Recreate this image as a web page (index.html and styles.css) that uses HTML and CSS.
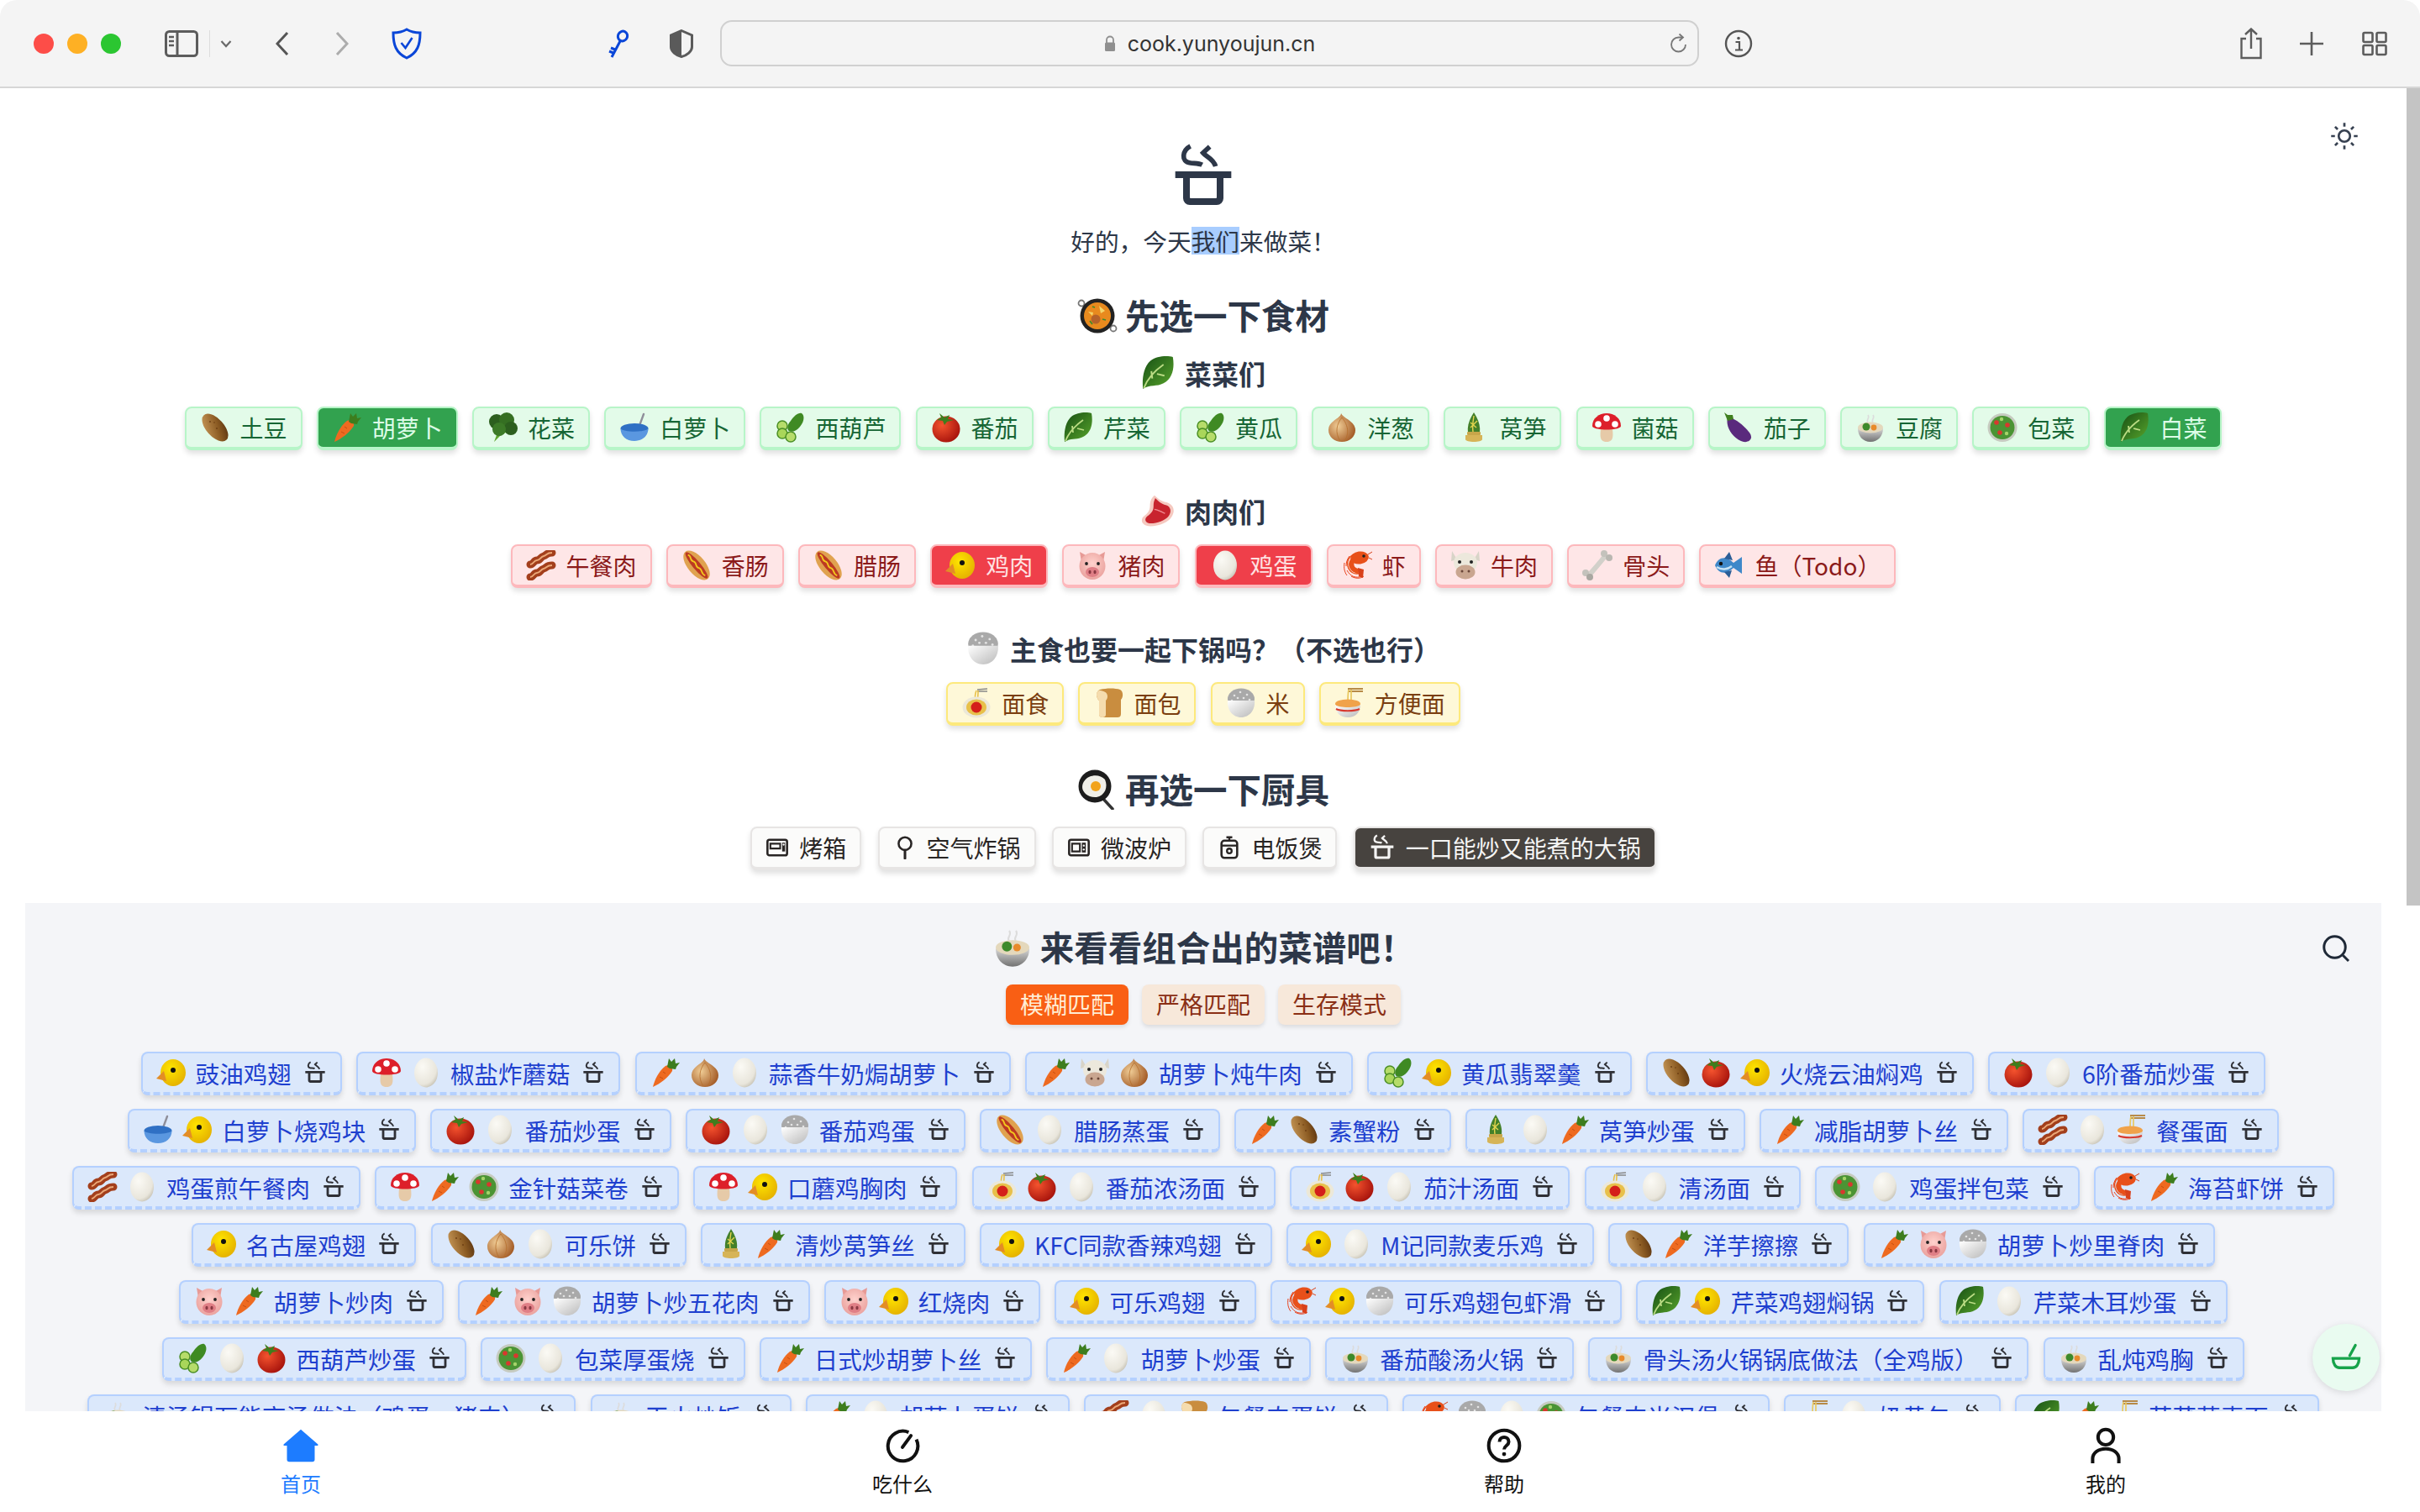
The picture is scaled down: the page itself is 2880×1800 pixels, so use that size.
FILE: index.html
```html
<!DOCTYPE html>
<html>
  <head>
    <meta charset="UTF-8">
    <title>cook.yunyoujun.cn</title>
    <link rel="stylesheet" href="styles.css">
  </head>
  <body>
    <!-- emoji + icon sprites -->
    <svg class="sprites" xmlns="http://www.w3.org/2000/svg">
      <defs>
        <linearGradient id="gPotato" x1="0" y1="0" x2="1" y2="1"><stop offset="0" stop-color="#d0a160"/><stop offset=".6" stop-color="#8a5a22"/><stop offset="1" stop-color="#4f2a0c"/></linearGradient>
        <radialGradient id="gTomato" cx=".35" cy=".35" r=".75"><stop offset="0" stop-color="#f4532e"/><stop offset="1" stop-color="#a20f0a"/></radialGradient>
        <radialGradient id="gEgg" cx=".35" cy=".3" r=".85"><stop offset="0" stop-color="#fbfaf5"/><stop offset=".7" stop-color="#e9e6dc"/><stop offset="1" stop-color="#b5b0a0"/></radialGradient>
        <radialGradient id="gOnion" cx=".35" cy=".45" r=".75"><stop offset="0" stop-color="#f0cd96"/><stop offset="1" stop-color="#9a4d18"/></radialGradient>
        <radialGradient id="gChick" cx=".4" cy=".35" r=".8"><stop offset="0" stop-color="#ffe500"/><stop offset="1" stop-color="#e0a800"/></radialGradient>
        <radialGradient id="gPig" cx=".5" cy=".4" r=".7"><stop offset="0" stop-color="#ffd2cd"/><stop offset="1" stop-color="#e79a96"/></radialGradient>
        <linearGradient id="gStew" x1="0" y1="0" x2="0" y2="1"><stop offset="0" stop-color="#d6d6d6"/><stop offset="1" stop-color="#727272"/></linearGradient>
        <linearGradient id="gWhite" x1="0" y1="0" x2="1" y2="1"><stop offset="0" stop-color="#ffffff"/><stop offset="1" stop-color="#b9b9b9"/></linearGradient>
        <linearGradient id="gLeaf" x1="0" y1="0" x2="1" y2="1"><stop offset="0" stop-color="#164f14"/><stop offset="1" stop-color="#5aa62c"/></linearGradient>
      </defs>

      <symbol id="e-potato" viewBox="0 0 36 36"><ellipse cx="18" cy="18" rx="10.500" ry="20" transform="rotate(-42 18 18)" fill="url(#gPotato)"/><circle cx="12" cy="11" r=".9" fill="#6b3d12"/><circle cx="20" cy="19" r=".9" fill="#6b3d12"/><circle cx="17" cy="12" r=".8" fill="#6b3d12"/></symbol>
      <symbol id="e-carrot" viewBox="0 0 36 36"><path d="M3 35C5 26 11 15 18 10c4-2 9 1 8 6-5 8-14 15-23 19z" fill="#ee6a20"/><path d="M11 23l4 2M15 17l3 2" stroke="#c64e10" stroke-width="1"/><path d="M20 11L22 1l3 4 4-4 1 6 5-1-4 5-1 3-7-1z" fill="#3d7d1e"/></symbol>
      <symbol id="e-broccoli" viewBox="0 0 36 36"><path d="M8 35l6-16 11 3-10 6z" fill="#5da52c"/><circle cx="11" cy="11" r="9" fill="#2c5f1e"/><circle cx="23" cy="9" r="9" fill="#356f22"/><circle cx="28" cy="19" r="8" fill="#2c5f1e"/><circle cx="14" cy="20" r="8" fill="#3c7a27"/></symbol>
      <symbol id="e-bowl" viewBox="0 0 36 36"><path d="M29 2l-7 19" stroke="#8f8f9a" stroke-width="2.400" stroke-linecap="round"/><ellipse cx="18" cy="19" rx="16.500" ry="6" fill="#2f70c4"/><path d="M1.500 19c3 5 30 5 33 0 0 9-7 15-16.500 15S1.500 28 1.500 19z" fill="#5a97e0"/></symbol>
      <symbol id="e-cucumber" viewBox="0 0 36 36"><path d="M32 1c4 3 3 10-2 16-4 5-9 7-13 5-3-2-2-8 2-12 4-6 9-10 13-9z" fill="#3f8a23"/><circle cx="9" cy="16" r="6" fill="#b6dc6a" stroke="#4b8f25" stroke-width="1.500"/><circle cx="9" cy="25" r="6" fill="#a9d65a" stroke="#4b8f25" stroke-width="1.500"/><circle cx="19" cy="29" r="6" fill="#b6dc6a" stroke="#4b8f25" stroke-width="1.500"/></symbol>
      <symbol id="e-tomato" viewBox="0 0 36 36"><ellipse cx="18" cy="20" rx="16.500" ry="15.500" fill="url(#gTomato)"/><path d="M10 1l6 5 6-3-2 5 7 1-8 2-3 4-2-5-7-1 5-3z" fill="#3f7d1d"/></symbol>
      <symbol id="e-leafy" viewBox="0 0 36 36"><path d="M2 35C1 26 2 12 10 5 16 0 28-1 34 1c2 11 0 23-10 28-7 4-15 1-22 6z" fill="url(#gLeaf)"/><path d="M3 34c4-10 11-18 21-25M12 24l-1-8M17 19l8 2" stroke="#bbdc84" stroke-width="1.800" fill="none"/></symbol>
      <symbol id="e-onion" viewBox="0 0 36 36"><path d="M17 1c0 6-15 9-15 20 0 8 7 14 16 14s16-6 16-14C34 10 19 7 17 1z" fill="url(#gOnion)"/><path d="M18 6c-6 7-9 18-2 28M18 6c6 7 10 18 3 28" stroke="#b56f2c" stroke-width=".8" fill="none"/></symbol>
      <symbol id="e-bamboo" viewBox="0 0 36 36"><path d="M18 0c-5 8-8 15-7 23h14c1-8-2-15-7-23z" fill="#44802a"/><path d="M18 4c-1 6-2 12-1 19M14 12l7 6M22 10l-8 8" stroke="#e3d34e" stroke-width="1.400" fill="none"/><rect x="10" y="23" width="16" height="4" rx="1" fill="#c7a64a"/><path d="M8 27h20v5c0 4-20 4-20 0z" fill="#d6b457"/></symbol>
      <symbol id="e-mushroom" viewBox="0 0 36 36"><path d="M11 18h14c0 7 3 17-7 17s-7-10-7-17z" fill="#e6caa8"/><path d="M1 16C1 7 9 1 18 1s17 6 17 15c0 6-34 6-34 0z" fill="#dd1f2a"/><circle cx="18" cy="7" r="3.800" fill="#fff"/><circle cx="8" cy="14" r="3.800" fill="#fff"/><circle cx="28" cy="14" r="3.800" fill="#fff"/></symbol>
      <symbol id="e-eggplant" viewBox="0 0 36 36"><path d="M5 6c9 1 18 8 26 18 5 7 0 12-7 11C12 32 2 18 5 6z" fill="#5a2a7d"/><path d="M1 0l4 3 6 0 1 5-7 2-2-5z" fill="#3f7f1f"/></symbol>
      <symbol id="e-stew" viewBox="0 0 36 36"><path d="M15 12c-3-3 3-5 0-9M21 12c-3-3 3-5 0-9" stroke="#dcdcdc" stroke-width="1.600" fill="none"/><path d="M3 19c0 9 6 16 15 16s15-7 15-16z" fill="url(#gStew)"/><ellipse cx="18" cy="18" rx="15" ry="6.500" fill="#e4d8bc"/><circle cx="13" cy="17" r="4.500" fill="#3d8a2b"/><circle cx="22" cy="18" r="3.400" fill="#e88a2a"/></symbol>
      <symbol id="e-salad" viewBox="0 0 36 36"><ellipse cx="18" cy="18" rx="17.500" ry="17" fill="#c6cbc0"/><ellipse cx="18" cy="18" rx="14.500" ry="14" fill="#4b9434"/><circle cx="11" cy="12" r="2.800" fill="#d8382e"/><circle cx="24" cy="15" r="2.800" fill="#d8382e"/><circle cx="15" cy="24" r="2.800" fill="#d8382e"/><circle cx="23" cy="25" r="2.200" fill="#a5d46a"/><circle cx="17" cy="8" r="2.200" fill="#a5d46a"/></symbol>
      <symbol id="e-bacon" viewBox="0 0 36 36"><path d="M5 17c4 0 4-5 8-5s4-4 8-5 3-4 10-4" stroke="#a33f1c" stroke-width="9" fill="none" stroke-linecap="round"/><path d="M5 17c4 0 4-5 8-5s4-4 8-5 3-4 10-4" stroke="#eba878" stroke-width="2" fill="none"/><path d="M5 32c4 0 4-5 8-5s4-4 8-5 3-4 10-4" stroke="#a33f1c" stroke-width="9" fill="none" stroke-linecap="round"/><path d="M5 32c4 0 4-5 8-5s4-4 8-5 3-4 10-4" stroke="#eba878" stroke-width="2" fill="none"/></symbol>
      <symbol id="e-hotdog" viewBox="0 0 36 36"><g transform="rotate(-40 18 18)"><ellipse cx="18" cy="18" rx="10.500" ry="21" fill="#e0a24f"/><ellipse cx="18" cy="18" rx="4.800" ry="20" fill="#bd3a22"/><path d="M18 2c3 4-3 6 0 10s-3 6 0 10 -3 6 0 12" stroke="#f2c91d" stroke-width="1.800" fill="none"/></g></symbol>
      <symbol id="e-chick" viewBox="0 0 36 36"><ellipse cx="20" cy="18" rx="15" ry="16" fill="url(#gChick)"/><circle cx="20" cy="15" r="3" fill="#111"/><path d="M9 16L0 25l12 3z" fill="#e38d26"/></symbol>
      <symbol id="e-pig" viewBox="0 0 36 36"><path d="M3 2l9 5-7 7zM33 2l-9 5 7 7z" fill="#e79a96"/><ellipse cx="18" cy="19" rx="15.500" ry="16" fill="url(#gPig)"/><circle cx="11" cy="16" r="1.900" fill="#222"/><circle cx="25" cy="16" r="1.900" fill="#222"/><ellipse cx="18" cy="26" rx="8" ry="6" fill="#e07f86"/><ellipse cx="15" cy="26" rx="1.600" ry="2.200" fill="#8a3942"/><ellipse cx="21" cy="26" rx="1.600" ry="2.200" fill="#8a3942"/></symbol>
      <symbol id="e-egg" viewBox="0 0 36 36"><ellipse cx="18" cy="18" rx="14" ry="17.500" fill="url(#gEgg)"/></symbol>
      <symbol id="e-shrimp" viewBox="0 0 36 36"><path d="M22 27c-7 3-13-1-15-8-2-8 4-15 13-15" stroke="#e8501a" stroke-width="1.400" fill="none"/><path d="M6 24c4 7 10 10 18 7M11 31c5 3 11 3 15 0M3 15c-1 6 0 11 3 15M9 7c-3 4-4 8-4 12" stroke="#e8401a" stroke-width="1" fill="none"/><ellipse cx="21" cy="9" rx="11" ry="7.500" transform="rotate(-8 21 9)" fill="#e8501a"/><path d="M13 12C9 17 12 24 20 25" stroke="#e8501a" stroke-width="6" fill="none"/><path d="M19 21l7 2-1 10-5-2z" fill="#d8401a"/><circle cx="26" cy="7" r="1.800" fill="#222"/><path d="M31 5l5-3M32 9l4 2" stroke="#d8401a" stroke-width="1"/></symbol>
      <symbol id="e-cow" viewBox="0 0 36 36"><path d="M2 1l6 10-7 2zM34 1l-6 10 7 2z" fill="#d8d4c8"/><ellipse cx="18" cy="15" rx="14" ry="12" fill="#ece8dc"/><circle cx="11" cy="14" r="2" fill="#222"/><circle cx="25" cy="14" r="2" fill="#222"/><ellipse cx="18" cy="26" rx="11.500" ry="8.500" fill="#c9a690"/><circle cx="14" cy="25" r="1.500" fill="#6a4638"/><circle cx="22" cy="25" r="1.500" fill="#6a4638"/></symbol>
      <symbol id="e-bone" viewBox="0 0 36 36"><path d="M8 30c5-6 13-15 20-24" stroke="#d2d0ca" stroke-width="6" fill="none"/><circle cx="26" cy="4" r="4" fill="#c4c2bc"/><circle cx="32" cy="9" r="4" fill="#b9b7b1"/><circle cx="4" cy="27" r="4" fill="#c4c2bc"/><circle cx="9" cy="32" r="4" fill="#a9a7a1"/></symbol>
      <symbol id="e-fish" viewBox="0 0 36 36"><path d="M1 18C5 8 14 6 23 15l10-7v20l-10-7C14 30 5 28 1 18z" fill="#3f88c9"/><path d="M12 10l6-8 4 10zM12 26l6 7 3-9z" fill="#2a5d96"/><circle cx="8" cy="16" r="2.200" fill="#111"/><path d="M3 20c6 4 13 3 18-1" stroke="#c5e2f5" stroke-width="2.400" fill="none"/></symbol>
      <symbol id="e-spaghetti" viewBox="0 0 36 36"><path d="M19 2l12-1M19 4h12" stroke="#888" stroke-width="1.500"/><path d="M18 3c-2 5-2 8-1 12M20 3c0 5 0 8-1 12" stroke="#e8c04a" stroke-width="1.600" fill="none"/><ellipse cx="18" cy="23" rx="16.500" ry="12.500" fill="#ece8d8"/><ellipse cx="18" cy="23" rx="12" ry="9.500" fill="#e8c04a"/><circle cx="18" cy="23" r="6.500" fill="#d41f1a"/></symbol>
      <symbol id="e-bread" viewBox="0 0 36 36"><path d="M8 2c8-2 18-2 24 0 4 2 4 9 1 12v17c0 3-2 4-4 4H12c-3 0-5-1-5-4V15C3 11 3 4 8 2z" fill="#c98d3f"/><path d="M7 3c5 0 10 2 10 7 0 2-1 4-2 5v17c0 2-2 3-4 3-2 0-4-1-4-3V15C3 11 3 4 7 3z" fill="#f5dcae"/></symbol>
      <symbol id="e-rice" viewBox="0 0 36 36"><ellipse cx="18" cy="13" rx="16" ry="12.500" fill="#a9a9a9"/><g fill="#e4e4e4"><circle cx="10" cy="9" r="1.300"/><circle cx="17" cy="5" r="1.300"/><circle cx="25" cy="8" r="1.300"/><circle cx="14" cy="12" r="1.300"/><circle cx="21" cy="12" r="1.300"/><circle cx="28" cy="14" r="1.300"/><circle cx="7" cy="15" r="1.300"/></g><path d="M2 15h32c1 11-6 20-16 20S1 26 2 15z" fill="url(#gWhite)"/></symbol>
      <symbol id="e-ramen" viewBox="0 0 36 36"><path d="M16 1h18M16 4h18" stroke="#b78a48" stroke-width="1.800"/><path d="M17 2c-1 5-1 10-1 17M20 2v17" stroke="#e8c860" stroke-width="1.700" fill="none"/><ellipse cx="16" cy="19" rx="15" ry="5.500" fill="#f0a24a"/><path d="M1 20c4 4 26 4 30 0 0 9-6 15-15 15S1 29 1 20z" fill="url(#gWhite)"/><path d="M2 25c6 3 22 3 28 0" stroke="#d8382e" stroke-width="2" fill="none"/></symbol>
      <symbol id="e-steak" viewBox="0 0 48 48"><g transform="translate(-6 0) scale(1.250 1)"><path d="M20 2c6 6 7 8 14 10 8 3 10 12 6 20-3 8-16 15-27 14-9-2-9-11-4-15 5-5 6-9 6-16 0-5 2-10 5-13z" fill="#f5c9c0"/><path d="M21 6c5 6 7 8 12 10 6 2 7 10 3 16-4 6-15 11-22 10-6-2-5-8-1-11 6-6 6-10 6-15 0-4 1-7 2-10z" fill="#c8242e"/><path d="M20 22c5 1 9 4 12 6" stroke="#f08a90" stroke-width="1.600" fill="none"/></g></symbol>
      <symbol id="e-paella" viewBox="0 0 48 48"><circle cx="5" cy="9" r="3.500" fill="none" stroke="#777" stroke-width="1.800"/><circle cx="43" cy="39" r="3.500" fill="none" stroke="#777" stroke-width="1.800"/><circle cx="24" cy="24" r="20.500" fill="#222"/><circle cx="24" cy="24" r="16" fill="#e88a1e"/><circle cx="22" cy="28" r="5.500" fill="#b5622a"/><path d="M26 12l7 6-5 3zM13 19l6 1-1 4z" fill="#f4d56a"/><path d="M15 30l3 4M30 28l4 1M18 13l3 1" stroke="#3f8a2a" stroke-width="1.800"/></symbol>
      <symbol id="e-pan" viewBox="0 0 48 48"><path d="M30 34l12 13" stroke="#333" stroke-width="3.500" stroke-linecap="round"/><ellipse cx="21" cy="20" rx="19.500" ry="19.500" fill="#1c1c1c"/><path d="M9 13c5-7 18-8 24-1 4 9 0 19-10 21C13 34 6 27 6 21c0-3 1-6 3-8z" fill="#f0efe8"/><circle cx="22" cy="20" r="6" fill="#f2a31b"/></symbol>

      <symbol id="pot" viewBox="0 0 24 24"><path d="M7.400 1.200C4.600 2.600 3.800 6.800 7.400 7.200 9 7.400 10.500 7.300 11.600 7.900M14.300 1.400L11.900 3.600C13 5 15.600 5.600 16.400 8.400" fill="none" stroke="currentColor" stroke-width="1.700"/><path fill-rule="evenodd" d="M2 10.200h20v2.400h-2.800v7.200a2.400 2.400 0 0 1-2.400 2.400H7.200a2.400 2.400 0 0 1-2.400-2.400v-7.200H2zM7.200 12.600v6.900c0 .2.100.3.300.3h9c.2 0 .3-.1.300-.3v-6.900z" fill="currentColor"/></symbol>
      <symbol id="i-oven" viewBox="0 0 24 24"><rect x="2" y="4" width="20" height="16" rx="2" fill="none" stroke="currentColor" stroke-width="2.200"/><path d="M5 8h10v5H5z" fill="none" stroke="currentColor" stroke-width="1.800"/><path d="M17 7h3v9h-3z" fill="currentColor"/><circle cx="18.500" cy="9" r="1" fill="#fff"/></symbol>
      <symbol id="i-fryer" viewBox="0 0 24 24"><circle cx="12" cy="8" r="6.500" fill="none" stroke="currentColor" stroke-width="2.200"/><path d="M12 14.500V23" stroke="currentColor" stroke-width="2.600" stroke-linecap="round"/></symbol>
      <symbol id="i-wave" viewBox="0 0 24 24"><rect x="2" y="4" width="20" height="16" rx="2" fill="none" stroke="currentColor" stroke-width="2.200"/><path d="M5 8h8v8H5z" fill="none" stroke="currentColor" stroke-width="1.800"/><path d="M15 7h4v10h-4z" fill="currentColor"/><circle cx="17" cy="10" r="1" fill="#fff"/><circle cx="17" cy="14" r="1" fill="#fff"/></symbol>
      <symbol id="i-cooker" viewBox="0 0 24 24"><path d="M9 1.500h6M12 1.500V5" stroke="currentColor" stroke-width="2"/><rect x="4" y="5" width="16" height="17.500" rx="3" fill="none" stroke="currentColor" stroke-width="2.200"/><path d="M4 10h16" stroke="currentColor" stroke-width="2"/><circle cx="12" cy="15.500" r="2.400" fill="none" stroke="currentColor" stroke-width="2"/></symbol>
    </svg>

    <div class="toolbar">
      <span class="light red"></span>
      <span class="light yellow"></span>
      <span class="light green"></span>
      <svg class="tb sidebar" viewBox="0 0 40 32"><rect x="1.500" y="1.500" width="37" height="29" rx="4" fill="none" stroke="#5c5c5c" stroke-width="3"/><path d="M15 2v28" stroke="#5c5c5c" stroke-width="3"/><path d="M5 8h6M5 13h6M5 18h6" stroke="#5c5c5c" stroke-width="2.400"/></svg>
      <span class="tb-sep"></span>
      <svg class="tb chev" viewBox="0 0 14 10"><path d="M1.500 2l5.500 6 5.500-6" fill="none" stroke="#6a6a6a" stroke-width="2.200"/></svg>
      <svg class="tb back" viewBox="0 0 16 30"><path d="M14 2L2 15l12 13" fill="none" stroke="#555" stroke-width="3"/></svg>
      <svg class="tb forward" viewBox="0 0 16 30"><path d="M2 2l12 13L2 28" fill="none" stroke="#acacac" stroke-width="3"/></svg>
      <svg class="tb shield" viewBox="0 0 38 38"><path d="M19 2c5 3 10 4 16 4 0 14-3 24-16 30C6 30 3 20 3 6c6 0 11-1 16-4z" fill="none" stroke="#0a46d8" stroke-width="3"/><path d="M12.500 18l5 6 8-12" fill="none" stroke="#0a46d8" stroke-width="2.600"/></svg>
      <svg class="tb key" viewBox="0 0 28 34"><ellipse cx="20" cy="8" rx="5.500" ry="6" fill="none" stroke="#0a46d8" stroke-width="3" transform="rotate(25 20 8)"/><path d="M17 14L7 33M11 24l-5-2M9 28l-5-2" fill="none" stroke="#0a46d8" stroke-width="3"/></svg>
      <svg class="tb half" viewBox="0 0 28 34"><path d="M14 1.500L26.500 7v14c0 5-6 10-12.500 11.500C7.500 31 1.500 26 1.500 21V7z" fill="none" stroke="#5a5a5a" stroke-width="3"/><path d="M14 1.500L1.500 7v14c0 5 6 10 12.500 11.500z" fill="#5a5a5a"/></svg>
      <div class="address">
        <svg class="lock" viewBox="0 0 14 20"><path d="M3 9V5.500a4 4 0 0 1 8 0V9" fill="none" stroke="#8f8f8f" stroke-width="1.800"/><rect x="1" y="8.500" width="12" height="10.500" rx="1.500" fill="#8f8f8f"/></svg>
        <span class="url">cook.yunyoujun.cn</span>
        <svg class="reload" viewBox="0 0 24 26"><path d="M20 14a8.500 8.500 0 1 1-8.500-8.500H16" fill="none" stroke="#777" stroke-width="1.800"/><path d="M12.500 1.500L17 5.500l-4.500 4" fill="none" stroke="#777" stroke-width="1.800"/></svg>
      </div>
      <svg class="tb info" viewBox="0 0 34 34"><circle cx="17" cy="17" r="15" fill="none" stroke="#555" stroke-width="2.400"/><circle cx="17" cy="10.500" r="1.800" fill="#555"/><path d="M13.500 15H18v9M13 24.500h9" fill="none" stroke="#555" stroke-width="2.200"/></svg>
      <span class="tb-grow"></span>
      <svg class="tb share" viewBox="0 0 30 38"><path d="M9 13H3.500v23h23V13H21" fill="none" stroke="#5c5c5c" stroke-width="2.400"/><path d="M15 25V2M8 8l7-6.500L22 8" fill="none" stroke="#5c5c5c" stroke-width="2.400"/></svg>
      <svg class="tb plus" viewBox="0 0 30 30"><path d="M15 1v28M1 15h28" stroke="#5c5c5c" stroke-width="2.600"/></svg>
      <svg class="tb tabs" viewBox="0 0 30 30"><g fill="none" stroke="#5c5c5c" stroke-width="2.600"><rect x="1.500" y="2" width="11" height="11" rx="1.500"/><rect x="17.500" y="2" width="11" height="11" rx="1.500"/><rect x="1.500" y="17" width="11" height="11" rx="1.500"/><rect x="17.500" y="17" width="11" height="11" rx="1.500"/></g></svg>
    </div>

    <div class="window">
      <div class="page">
        <main class="content">
          <svg class="theme-btn" viewBox="0 0 24 24"><circle cx="12" cy="12" r="4.500" fill="none" stroke="currentColor" stroke-width="1.800"/><path d="M12 1.500v3M12 19.500v3M1.500 12h3M19.500 12h3M4.600 4.600l2.100 2.100M17.300 17.300l2.100 2.100M4.600 19.400l2.100-2.100M17.300 6.700l2.100-2.100" stroke="currentColor" stroke-width="1.800"/></svg>

          <svg class="logo"><use href="#pot"/></svg>
          <p class="tagline">好的，今天<span class="selected">我们</span>来做菜！</p>

          <h2 class="title"><svg class="emo-l"><use href="#e-paella"/></svg>先选一下食材</h2>

          <h3 class="subtitle"><svg class="emo-m"><use href="#e-leafy"/></svg>菜菜们</h3>
          <div class="row">
            <span class="chip veg"><svg class="emo"><use href="#e-potato"/></svg>土豆</span>
            <span class="chip veg on"><svg class="emo"><use href="#e-carrot"/></svg>胡萝卜</span>
            <span class="chip veg"><svg class="emo"><use href="#e-broccoli"/></svg>花菜</span>
            <span class="chip veg"><svg class="emo"><use href="#e-bowl"/></svg>白萝卜</span>
            <span class="chip veg"><svg class="emo"><use href="#e-cucumber"/></svg>西葫芦</span>
            <span class="chip veg"><svg class="emo"><use href="#e-tomato"/></svg>番茄</span>
            <span class="chip veg"><svg class="emo"><use href="#e-leafy"/></svg>芹菜</span>
            <span class="chip veg"><svg class="emo"><use href="#e-cucumber"/></svg>黄瓜</span>
            <span class="chip veg"><svg class="emo"><use href="#e-onion"/></svg>洋葱</span>
            <span class="chip veg"><svg class="emo"><use href="#e-bamboo"/></svg>莴笋</span>
            <span class="chip veg"><svg class="emo"><use href="#e-mushroom"/></svg>菌菇</span>
            <span class="chip veg"><svg class="emo"><use href="#e-eggplant"/></svg>茄子</span>
            <span class="chip veg"><svg class="emo"><use href="#e-stew"/></svg>豆腐</span>
            <span class="chip veg"><svg class="emo"><use href="#e-salad"/></svg>包菜</span>
            <span class="chip veg on"><svg class="emo"><use href="#e-leafy"/></svg>白菜</span>
          </div>

          <h3 class="subtitle gap"><svg class="emo-m"><use href="#e-steak"/></svg>肉肉们</h3>
          <div class="row">
            <span class="chip meat"><svg class="emo"><use href="#e-bacon"/></svg>午餐肉</span>
            <span class="chip meat"><svg class="emo"><use href="#e-hotdog"/></svg>香肠</span>
            <span class="chip meat"><svg class="emo"><use href="#e-hotdog"/></svg>腊肠</span>
            <span class="chip meat on"><svg class="emo"><use href="#e-chick"/></svg>鸡肉</span>
            <span class="chip meat"><svg class="emo"><use href="#e-pig"/></svg>猪肉</span>
            <span class="chip meat on"><svg class="emo"><use href="#e-egg"/></svg>鸡蛋</span>
            <span class="chip meat"><svg class="emo"><use href="#e-shrimp"/></svg>虾</span>
            <span class="chip meat"><svg class="emo"><use href="#e-cow"/></svg>牛肉</span>
            <span class="chip meat"><svg class="emo"><use href="#e-bone"/></svg>骨头</span>
            <span class="chip meat"><svg class="emo"><use href="#e-fish"/></svg>鱼（Todo）</span>
          </div>

          <h3 class="subtitle gap"><svg class="emo-m"><use href="#e-rice"/></svg>主食也要一起下锅吗？（不选也行）</h3>
          <div class="row">
            <span class="chip staple"><svg class="emo"><use href="#e-spaghetti"/></svg>面食</span>
            <span class="chip staple"><svg class="emo"><use href="#e-bread"/></svg>面包</span>
            <span class="chip staple"><svg class="emo"><use href="#e-rice"/></svg>米</span>
            <span class="chip staple"><svg class="emo"><use href="#e-ramen"/></svg>方便面</span>
          </div>

          <h2 class="title gap"><svg class="emo-l"><use href="#e-pan"/></svg>再选一下厨具</h2>
          <div class="row tools">
            <span class="chip tool"><svg class="tool-icon"><use href="#i-oven"/></svg>烤箱</span>
            <span class="chip tool"><svg class="tool-icon"><use href="#i-fryer"/></svg>空气炸锅</span>
            <span class="chip tool"><svg class="tool-icon"><use href="#i-wave"/></svg>微波炉</span>
            <span class="chip tool"><svg class="tool-icon"><use href="#i-cooker"/></svg>电饭煲</span>
            <span class="chip tool on"><svg class="tool-icon"><use href="#pot"/></svg>一口能炒又能煮的大锅</span>
          </div>

          <section class="recipes">
            <svg class="search-btn" viewBox="0 0 24 24"><circle cx="11" cy="11" r="8.500" fill="none" stroke="currentColor" stroke-width="2"/><path d="M17.500 17.500L22 22" stroke="currentColor" stroke-width="2"/></svg>
            <h2 class="title"><svg class="emo-l"><use href="#e-stew"/></svg>来看看组合出的菜谱吧！</h2>
            <div class="modes">
              <span class="mode on">模糊匹配</span>
              <span class="mode">严格匹配</span>
              <span class="mode">生存模式</span>
            </div>

            <div class="recipe-rows">
              <div class="row">
                <span class="chip dish"><svg class="emo"><use href="#e-chick"/></svg>豉油鸡翅<svg class="pot"><use href="#pot"/></svg></span>
                <span class="chip dish"><svg class="emo"><use href="#e-mushroom"/></svg><svg class="emo"><use href="#e-egg"/></svg>椒盐炸蘑菇<svg class="pot"><use href="#pot"/></svg></span>
                <span class="chip dish"><svg class="emo"><use href="#e-carrot"/></svg><svg class="emo"><use href="#e-onion"/></svg><svg class="emo"><use href="#e-egg"/></svg>蒜香牛奶焗胡萝卜<svg class="pot"><use href="#pot"/></svg></span>
                <span class="chip dish"><svg class="emo"><use href="#e-carrot"/></svg><svg class="emo"><use href="#e-cow"/></svg><svg class="emo"><use href="#e-onion"/></svg>胡萝卜炖牛肉<svg class="pot"><use href="#pot"/></svg></span>
                <span class="chip dish"><svg class="emo"><use href="#e-cucumber"/></svg><svg class="emo"><use href="#e-chick"/></svg>黄瓜翡翠羹<svg class="pot"><use href="#pot"/></svg></span>
                <span class="chip dish"><svg class="emo"><use href="#e-potato"/></svg><svg class="emo"><use href="#e-tomato"/></svg><svg class="emo"><use href="#e-chick"/></svg>火烧云油焖鸡<svg class="pot"><use href="#pot"/></svg></span>
                <span class="chip dish"><svg class="emo"><use href="#e-tomato"/></svg><svg class="emo"><use href="#e-egg"/></svg>6阶番茄炒蛋<svg class="pot"><use href="#pot"/></svg></span>
              </div>
              <div class="row">
                <span class="chip dish"><svg class="emo"><use href="#e-bowl"/></svg><svg class="emo"><use href="#e-chick"/></svg>白萝卜烧鸡块<svg class="pot"><use href="#pot"/></svg></span>
                <span class="chip dish"><svg class="emo"><use href="#e-tomato"/></svg><svg class="emo"><use href="#e-egg"/></svg>番茄炒蛋<svg class="pot"><use href="#pot"/></svg></span>
                <span class="chip dish"><svg class="emo"><use href="#e-tomato"/></svg><svg class="emo"><use href="#e-egg"/></svg><svg class="emo"><use href="#e-rice"/></svg>番茄鸡蛋<svg class="pot"><use href="#pot"/></svg></span>
                <span class="chip dish"><svg class="emo"><use href="#e-hotdog"/></svg><svg class="emo"><use href="#e-egg"/></svg>腊肠蒸蛋<svg class="pot"><use href="#pot"/></svg></span>
                <span class="chip dish"><svg class="emo"><use href="#e-carrot"/></svg><svg class="emo"><use href="#e-potato"/></svg>素蟹粉<svg class="pot"><use href="#pot"/></svg></span>
                <span class="chip dish"><svg class="emo"><use href="#e-bamboo"/></svg><svg class="emo"><use href="#e-egg"/></svg><svg class="emo"><use href="#e-carrot"/></svg>莴笋炒蛋<svg class="pot"><use href="#pot"/></svg></span>
                <span class="chip dish"><svg class="emo"><use href="#e-carrot"/></svg>减脂胡萝卜丝<svg class="pot"><use href="#pot"/></svg></span>
                <span class="chip dish"><svg class="emo"><use href="#e-bacon"/></svg><svg class="emo"><use href="#e-egg"/></svg><svg class="emo"><use href="#e-ramen"/></svg>餐蛋面<svg class="pot"><use href="#pot"/></svg></span>
              </div>
              <div class="row">
                <span class="chip dish"><svg class="emo"><use href="#e-bacon"/></svg><svg class="emo"><use href="#e-egg"/></svg>鸡蛋煎午餐肉<svg class="pot"><use href="#pot"/></svg></span>
                <span class="chip dish"><svg class="emo"><use href="#e-mushroom"/></svg><svg class="emo"><use href="#e-carrot"/></svg><svg class="emo"><use href="#e-salad"/></svg>金针菇菜卷<svg class="pot"><use href="#pot"/></svg></span>
                <span class="chip dish"><svg class="emo"><use href="#e-mushroom"/></svg><svg class="emo"><use href="#e-chick"/></svg>口蘑鸡胸肉<svg class="pot"><use href="#pot"/></svg></span>
                <span class="chip dish"><svg class="emo"><use href="#e-spaghetti"/></svg><svg class="emo"><use href="#e-tomato"/></svg><svg class="emo"><use href="#e-egg"/></svg>番茄浓汤面<svg class="pot"><use href="#pot"/></svg></span>
                <span class="chip dish"><svg class="emo"><use href="#e-spaghetti"/></svg><svg class="emo"><use href="#e-tomato"/></svg><svg class="emo"><use href="#e-egg"/></svg>茄汁汤面<svg class="pot"><use href="#pot"/></svg></span>
                <span class="chip dish"><svg class="emo"><use href="#e-spaghetti"/></svg><svg class="emo"><use href="#e-egg"/></svg>清汤面<svg class="pot"><use href="#pot"/></svg></span>
                <span class="chip dish"><svg class="emo"><use href="#e-salad"/></svg><svg class="emo"><use href="#e-egg"/></svg>鸡蛋拌包菜<svg class="pot"><use href="#pot"/></svg></span>
                <span class="chip dish"><svg class="emo"><use href="#e-shrimp"/></svg><svg class="emo"><use href="#e-carrot"/></svg>海苔虾饼<svg class="pot"><use href="#pot"/></svg></span>
              </div>
              <div class="row">
                <span class="chip dish"><svg class="emo"><use href="#e-chick"/></svg>名古屋鸡翅<svg class="pot"><use href="#pot"/></svg></span>
                <span class="chip dish"><svg class="emo"><use href="#e-potato"/></svg><svg class="emo"><use href="#e-onion"/></svg><svg class="emo"><use href="#e-egg"/></svg>可乐饼<svg class="pot"><use href="#pot"/></svg></span>
                <span class="chip dish"><svg class="emo"><use href="#e-bamboo"/></svg><svg class="emo"><use href="#e-carrot"/></svg>清炒莴笋丝<svg class="pot"><use href="#pot"/></svg></span>
                <span class="chip dish"><svg class="emo"><use href="#e-chick"/></svg>KFC同款香辣鸡翅<svg class="pot"><use href="#pot"/></svg></span>
                <span class="chip dish"><svg class="emo"><use href="#e-chick"/></svg><svg class="emo"><use href="#e-egg"/></svg>M记同款麦乐鸡<svg class="pot"><use href="#pot"/></svg></span>
                <span class="chip dish"><svg class="emo"><use href="#e-potato"/></svg><svg class="emo"><use href="#e-carrot"/></svg>洋芋擦擦<svg class="pot"><use href="#pot"/></svg></span>
                <span class="chip dish"><svg class="emo"><use href="#e-carrot"/></svg><svg class="emo"><use href="#e-pig"/></svg><svg class="emo"><use href="#e-rice"/></svg>胡萝卜炒里脊肉<svg class="pot"><use href="#pot"/></svg></span>
              </div>
              <div class="row">
                <span class="chip dish"><svg class="emo"><use href="#e-pig"/></svg><svg class="emo"><use href="#e-carrot"/></svg>胡萝卜炒肉<svg class="pot"><use href="#pot"/></svg></span>
                <span class="chip dish"><svg class="emo"><use href="#e-carrot"/></svg><svg class="emo"><use href="#e-pig"/></svg><svg class="emo"><use href="#e-rice"/></svg>胡萝卜炒五花肉<svg class="pot"><use href="#pot"/></svg></span>
                <span class="chip dish"><svg class="emo"><use href="#e-pig"/></svg><svg class="emo"><use href="#e-chick"/></svg>红烧肉<svg class="pot"><use href="#pot"/></svg></span>
                <span class="chip dish"><svg class="emo"><use href="#e-chick"/></svg>可乐鸡翅<svg class="pot"><use href="#pot"/></svg></span>
                <span class="chip dish"><svg class="emo"><use href="#e-shrimp"/></svg><svg class="emo"><use href="#e-chick"/></svg><svg class="emo"><use href="#e-rice"/></svg>可乐鸡翅包虾滑<svg class="pot"><use href="#pot"/></svg></span>
                <span class="chip dish"><svg class="emo"><use href="#e-leafy"/></svg><svg class="emo"><use href="#e-chick"/></svg>芹菜鸡翅焖锅<svg class="pot"><use href="#pot"/></svg></span>
                <span class="chip dish"><svg class="emo"><use href="#e-leafy"/></svg><svg class="emo"><use href="#e-egg"/></svg>芹菜木耳炒蛋<svg class="pot"><use href="#pot"/></svg></span>
              </div>
              <div class="row">
                <span class="chip dish"><svg class="emo"><use href="#e-cucumber"/></svg><svg class="emo"><use href="#e-egg"/></svg><svg class="emo"><use href="#e-tomato"/></svg>西葫芦炒蛋<svg class="pot"><use href="#pot"/></svg></span>
                <span class="chip dish"><svg class="emo"><use href="#e-salad"/></svg><svg class="emo"><use href="#e-egg"/></svg>包菜厚蛋烧<svg class="pot"><use href="#pot"/></svg></span>
                <span class="chip dish"><svg class="emo"><use href="#e-carrot"/></svg>日式炒胡萝卜丝<svg class="pot"><use href="#pot"/></svg></span>
                <span class="chip dish"><svg class="emo"><use href="#e-carrot"/></svg><svg class="emo"><use href="#e-egg"/></svg>胡萝卜炒蛋<svg class="pot"><use href="#pot"/></svg></span>
                <span class="chip dish"><svg class="emo"><use href="#e-stew"/></svg>番茄酸汤火锅<svg class="pot"><use href="#pot"/></svg></span>
                <span class="chip dish"><svg class="emo"><use href="#e-stew"/></svg>骨头汤火锅锅底做法（全鸡版）<svg class="pot"><use href="#pot"/></svg></span>
                <span class="chip dish"><svg class="emo"><use href="#e-stew"/></svg>乱炖鸡胸<svg class="pot"><use href="#pot"/></svg></span>
              </div>
              <div class="row">
                <span class="chip dish"><svg class="emo"><use href="#e-stew"/></svg>清汤锅万能高汤做法（鸡蛋、猪肉）<svg class="pot"><use href="#pot"/></svg></span>
                <span class="chip dish"><svg class="emo"><use href="#e-stew"/></svg>干火炒饭<svg class="pot"><use href="#pot"/></svg></span>
                <span class="chip dish"><svg class="emo"><use href="#e-carrot"/></svg><svg class="emo"><use href="#e-egg"/></svg>胡萝卜蛋饼<svg class="pot"><use href="#pot"/></svg></span>
                <span class="chip dish"><svg class="emo"><use href="#e-bacon"/></svg><svg class="emo"><use href="#e-egg"/></svg><svg class="emo"><use href="#e-bread"/></svg>午餐肉蛋饼<svg class="pot"><use href="#pot"/></svg></span>
                <span class="chip dish"><svg class="emo"><use href="#e-shrimp"/></svg><svg class="emo"><use href="#e-rice"/></svg><svg class="emo"><use href="#e-egg"/></svg><svg class="emo"><use href="#e-salad"/></svg>午餐肉米汉堡<svg class="pot"><use href="#pot"/></svg></span>
                <span class="chip dish"><svg class="emo"><use href="#e-ramen"/></svg><svg class="emo"><use href="#e-egg"/></svg>奶黄包<svg class="pot"><use href="#pot"/></svg></span>
                <span class="chip dish"><svg class="emo"><use href="#e-leafy"/></svg><svg class="emo"><use href="#e-carrot"/></svg><svg class="emo"><use href="#e-ramen"/></svg>芹菜荞麦面<svg class="pot"><use href="#pot"/></svg></span>
              </div>
            </div>
          </section>

          <button class="fab"><svg viewBox="0 0 36 36"><path d="M4 19h28c0 6-3 10-7 10H11c-4 0-7-4-7-10z" fill="none" stroke="#16a34a" stroke-width="3"/><path d="M22 16L28 5" stroke="#16a34a" stroke-width="3" stroke-linecap="round"/></svg></button>
        </main>

        <nav class="tabbar">
          <div class="tab active">
            <svg viewBox="0 0 24 24"><path d="M12 1.500L23 11c.4.400.2 1-.3 1H21v9a1.500 1.500 0 0 1-1.500 1.500h-15A1.500 1.500 0 0 1 3 21v-9H1.300c-.5 0-.7-.6-.3-1z" fill="currentColor"/></svg>
            <span>首页</span>
          </div>
          <div class="tab">
            <svg viewBox="0 0 24 24"><path d="M16 3.300A9.700 9.700 0 1 0 21 8" fill="none" stroke="currentColor" stroke-width="2.200"/><path d="M12 13l5.500-7.500" stroke="currentColor" stroke-width="2.200" stroke-linecap="round"/></svg>
            <span>吃什么</span>
          </div>
          <div class="tab">
            <svg viewBox="0 0 24 24"><circle cx="12" cy="12" r="10" fill="none" stroke="currentColor" stroke-width="2.200"/><path d="M9 9.500c0-4 6-4 6 0 0 2.500-3 2.500-3 5" fill="none" stroke="currentColor" stroke-width="2.200"/><circle cx="12" cy="17.500" r="1.300" fill="currentColor"/></svg>
            <span>帮助</span>
          </div>
          <div class="tab">
            <svg viewBox="0 0 24 24"><circle cx="12" cy="6.500" r="5" fill="none" stroke="currentColor" stroke-width="2.200"/><path d="M3.500 23.500v-3c0-4 4-6.500 8.500-6.500s8.500 2.500 8.500 6.500v3" fill="none" stroke="currentColor" stroke-width="2.200"/></svg>
            <span>我的</span>
          </div>
        </nav>
      </div>
      <div class="scrollbar"><div class="thumb"></div></div>
    </div>
  </body>
</html>
```

FILE: styles.css
```css
html, body {
  height: 100%;
  margin: 0;
}
body {
  display: flex;
  flex-direction: column;
  overflow: hidden;
  background: #fff;
  color: #2d3748;
  font-family: "Noto Sans CJK SC", "Noto Sans", sans-serif;
  font-size: 28px;
  text-spacing-trim: space-all;
}
.sprites {
  position: absolute;
  width: 0;
  height: 0;
}

/* browser chrome */
.toolbar {
  flex: none;
  display: flex;
  align-items: center;
  box-sizing: border-box;
  height: 105px;
  padding-left: 40px;
  background: #f4f4f4;
  border-bottom: 2px solid #d6d6d6;
  border-radius: 20px 20px 0 0;
}
.light {
  flex: none;
  width: 24px;
  height: 24px;
  margin-right: 16px;
  border-radius: 50%;
}
.red { background: #fd4d48; }
.yellow { background: #feb024; }
.green { background: #2bc631; }
.tb { flex: none; display: block; }
.sidebar { width: 40px; height: 32px; margin-left: 36px; }
.tb-sep { flex: none; width: 1px; height: 32px; margin-left: 13px; background: #dcdcdc; }
.chev { width: 14px; height: 10px; margin-left: 12px; }
.back { width: 16px; height: 30px; margin-left: 52px; }
.forward { width: 16px; height: 30px; margin-left: 55px; }
.shield { width: 38px; height: 38px; margin-left: 50px; }
.key { width: 28px; height: 34px; margin-left: 218px; }
.half { width: 28px; height: 34px; margin-left: 48px; }
.address {
  flex: none;
  position: relative;
  display: flex;
  align-items: center;
  justify-content: center;
  box-sizing: border-box;
  width: 1165px;
  height: 55px;
  margin-left: 32px;
  border: 2px solid #d0d0d0;
  border-radius: 14px;
}
.lock { width: 14px; height: 20px; margin-right: 14px; }
.url {
  font-family: Inter, "Liberation Sans", sans-serif;
  font-size: 25px;
  color: #333;
}
.reload {
  position: absolute;
  right: 10px;
  top: 13px;
  width: 24px;
  height: 26px;
}
.info { width: 34px; height: 34px; margin-left: 30px; }
.tb-grow { flex: 1; }
.share { width: 30px; height: 38px; margin-right: 42px; }
.plus { width: 30px; height: 30px; margin-right: 45px; }
.tabs { width: 30px; height: 30px; margin-right: 39px; }

/* page */
.window {
  flex: 1;
  min-height: 0;
  display: flex;
}
.page {
  flex: 1;
  min-width: 0;
  display: flex;
  flex-direction: column;
}
.scrollbar {
  flex: none;
  width: 16px;
}
.thumb {
  height: 973px;
  background: #c4c4c4;
}
.content {
  flex: 1;
  min-height: 0;
  position: relative;
  overflow: hidden;
  text-align: center;
}
.theme-btn {
  position: absolute;
  top: 39px;
  right: 56px;
  width: 36px;
  height: 36px;
  color: #374151;
}
.logo {
  display: block;
  width: 80px;
  height: 80px;
  margin: 65px auto 0;
  color: #2d3748;
}
.tagline {
  height: 36px;
  margin: 20px 0 0;
  font-size: 28.7px;
  line-height: 34px;
}
.selected {
  display: inline-block;
  line-height: 33px;
  vertical-align: top;
  background: #a8cdff;
}
.title, .subtitle {
  display: flex;
  align-items: center;
  justify-content: center;
  margin: 0;
  font-weight: 600;
}
.title {
  height: 48px;
  margin-top: 44px;
  padding-bottom: 2px;
  font-size: 40.5px;
  gap: 9px;
}
.subtitle {
  height: 40px;
  margin-top: 24px;
  font-size: 32px;
  gap: 12px;
}
.subtitle.gap { margin-top: 52px; }
.title.gap { margin-top: 50px; }
.emo-l { width: 48px; height: 48px; flex: none; margin-top: 3px; }
.emo-m { width: 40px; height: 40px; flex: none; }
.emo { width: 36px; height: 36px; flex: none; }
.row {
  display: flex;
  justify-content: center;
  gap: 17.2px;
  margin-top: 20px;
}
.row.tools { gap: 19.4px; }

.chip {
  flex: none;
  display: flex;
  align-items: center;
  gap: 12px;
  box-sizing: border-box;
  height: 52px;
  padding: 0 16px;
  border-style: solid;
  border-width: 2px 2px 4px;
  border-radius: 8px;
  box-shadow: 0 4px 6px rgba(0, 0, 0, 0.12);
  font-size: 28px;
  white-space: nowrap;
}
.veg { background: #e3fbe9; border-color: #b7f5c8; color: #166534; }
.veg.on { background: #32a24f; color: #dcfce7; }
.meat { background: #fee6e7; border-color: #fdb8bc; color: #8b1a1a; }
.meat.on { background: #ef3f4a; color: #fee2e2; }
.staple { background: #fef8d8; border-color: #fde97c; color: #7a3e10; }
.tool { background: #fbfbfa; border-color: #e7e5e4; color: #292524; }
.tool.on { background: #47433f; color: #f5f5f4; }
.tool-icon { flex: none; width: 28px; height: 28px; }
.tool.on .tool-icon { width: 32px; height: 32px; }

/* recipes panel */
.recipes {
  position: relative;
  height: 800px;
  margin: 39px 30px 0;
  padding-top: 27px;
  background: #f4f5f8;
}
.search-btn {
  position: absolute;
  top: 36px;
  right: 36px;
  width: 36px;
  height: 36px;
  color: #1f2937;
}
.recipes .title { margin-top: 0; }
.modes {
  display: flex;
  justify-content: center;
  gap: 16px;
  margin-top: 20px;
}
.mode {
  box-sizing: border-box;
  width: 146px;
  height: 48px;
  border-radius: 8px;
  background: #f7e8da;
  box-shadow: 0 3px 5px rgba(0, 0, 0, 0.1);
  color: #8a2f15;
  line-height: 46px;
}
.mode.on { background: #f95f14; color: #ffedd5; }
.recipe-rows {
  display: flex;
  flex-direction: column;
  gap: 16px;
  margin-top: 32px;
}
.recipe-rows .row { margin-top: 0; margin-left: -30px; margin-right: -30px; }
.dish {
  gap: 11px;
  background: #dbe8fb;
  border-color: #b4d0ff;
  border-bottom-style: dashed;
  color: #1e40cf;
  font-size: 28.5px;
}
.pot {
  flex: none;
  width: 28px;
  height: 28px;
  margin-left: 3px;
  color: #2f3036;
}
.fab {
  position: absolute;
  right: 32px;
  bottom: 24px;
  width: 80px;
  height: 80px;
  padding: 20px;
  border: 0;
  border-radius: 50%;
  background: #e9fbf0;
  box-shadow: 0 2px 8px rgba(0, 0, 0, 0.12);
}
.fab svg { display: block; width: 40px; height: 40px; }

/* bottom nav */
.tabbar {
  flex: none;
  display: grid;
  grid-template-columns: repeat(4, 1fr);
  height: 120px;
  background: #fff;
}
.tab {
  display: flex;
  flex-direction: column;
  align-items: center;
  padding-top: 19px;
  color: #111;
  font-size: 24px;
}
.tab svg { width: 44px; height: 44px; margin-bottom: 6px; }
.tab span { line-height: 34px; }
.tab.active { color: #1d7cff; }
```
